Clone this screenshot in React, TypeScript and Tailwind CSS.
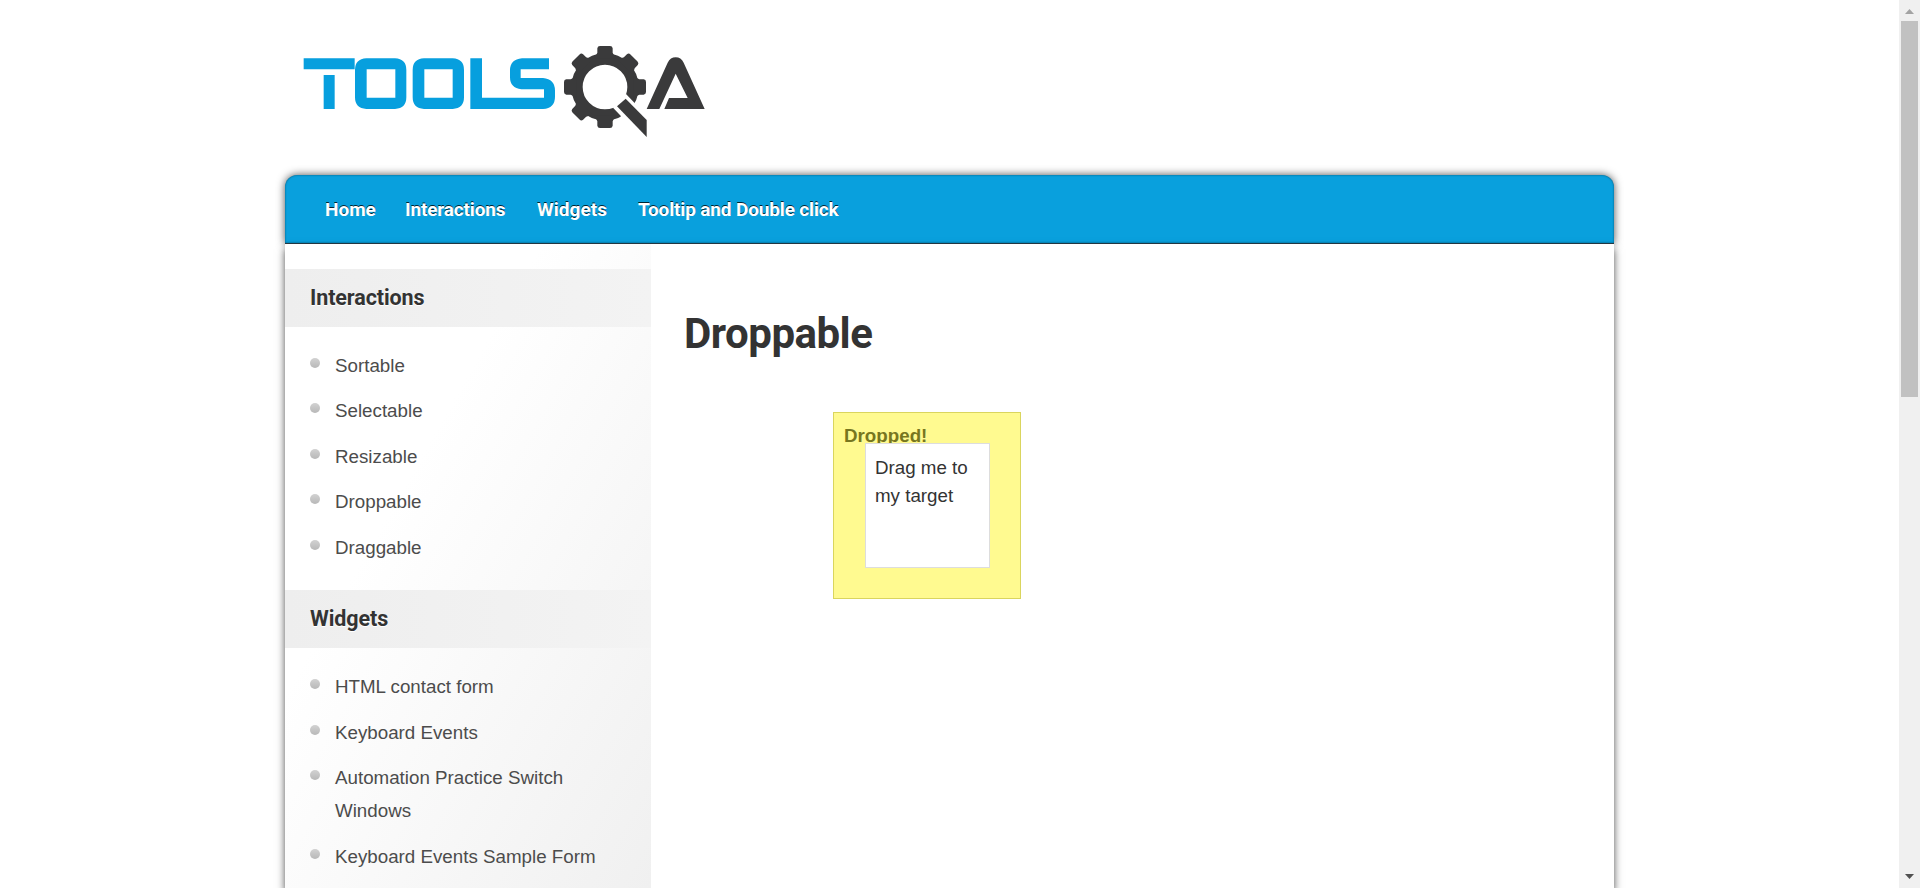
import React from "react";

const interactions = ["Sortable", "Selectable", "Resizable", "Droppable", "Draggable"];
const widgets = [
  "HTML contact form",
  "Keyboard Events",
  "Automation Practice Switch Windows",
  "Keyboard Events Sample Form",
];

function Logo() {
  return (
    <svg className="block h-[120px] w-[430px]" viewBox="0 0 1290 360" role="img" aria-label="ToolsQA">
      <g fill="#079fde" fillRule="evenodd">
        <path d="M41 85H194V118H41ZM101 135H134V237H101Z" />
        <path d="M229 85H315Q349 87 349 120V202Q349 235 315 237H229Q195 235 195 202V120Q195 87 229 85ZM230 118V203H316V118Z" />
        <path d="M402 85H488Q522 87 522 120V202Q522 235 488 237H402Q368 235 368 202V120Q368 87 402 85ZM403 118V203H488V118Z" />
        <path d="M541 85H576V203H762V178H694Q660 174 660 142V121Q660 88 696 85H777V118H692V144H759Q795 147 795 182V200Q795 234 759 237H541Z" />
      </g>
      <g fill="#3a3a3b">
        <circle cx="945" cy="171" r="84" fill="none" stroke="#3a3a3b" strokeWidth="34" />
        {[0, 45, 90, 180, 225, 270, 315].map((angle) => (
          <path
            key={angle}
            transform={`rotate(${angle} 945 171)`}
            d="M913 86L922 68V55Q923 48 930 48H960Q967 48 968 55V68L977 86Z"
          />
        ))}
        <path fill="#fff" d="M1008 192L1036 221L1090 240V340L1000 300L992 257L969 233L980 215Z" />
        <path d="M981 229L1007 206L1070 270V321Z" />
        <path d="M1070 237L1133 98Q1141 82 1157 82T1181 98L1244 237H1123L1137 204H1193L1157 131L1108 237Z" />
      </g>
    </svg>
  );
}

function MenuSection({
  title,
  items,
  listPadding,
}: {
  title: string;
  items: string[];
  listPadding: string;
}) {
  return (
    <section>
      <h3 className="flex h-[58px] items-center bg-linear-to-r from-[#eeeeee] to-[#f3f3f3] pt-px pl-[25px] font-[Roboto,sans-serif] text-[21.5px] font-bold tracking-[-0.1px] text-[#333] [text-shadow:0_1px_0_#fff]">
        {title}
      </h3>
      <ul className={`flex flex-col gap-[12.6px] pl-[25px] ${listPadding}`}>
        {items.map((item) => (
          <li key={item} className="flex items-start">
            <span className="mt-[9px] mr-[15px] size-[10px] shrink-0 rounded-full bg-linear-to-b from-[#d2d2d2] to-[#b8b8b8]" />
            <a className="w-[280px] text-[18.75px] leading-[33px] text-[#4c4c4c]">{item}</a>
          </li>
        ))}
      </ul>
    </section>
  );
}

export default function App() {
  return (
    <div className="flex h-[888px] w-full overflow-hidden bg-white font-['Liberation_Sans',Arial,sans-serif]">
      <div className="flex h-full min-w-0 flex-1 flex-col pl-[285px]">
        <header className="h-[175px] shrink-0 pt-[30px] pl-[5px]">
          <Logo />
        </header>
        <nav className="flex h-[69px] w-[1329px] shrink-0 items-center rounded-t-[12px] border-b border-[#263b46] bg-[#09a0dd] pt-[2px] pl-[40px] font-[Roboto,sans-serif] text-[19px] font-bold whitespace-nowrap text-white shadow-[0_0_8px_#000000b0,inset_0_0_2px_#00000080] [text-shadow:0_-1px_0_#000000cc]">
          <a className="w-[80px]">Home</a>
          <a className="w-[132px] tracking-[-0.15px]">Interactions</a>
          <a className="w-[101px] tracking-[0.05px]">Widgets</a>
          <a className="tracking-[-0.15px]">Tooltip and Double click</a>
        </nav>
        <main className="flex min-h-0 w-[1329px] flex-1 bg-white shadow-[0_5px_8px_#000000b0]">
          <aside className="w-[366px] shrink-0 bg-linear-to-br from-white from-35% to-[#f0f0f0] pt-[25px]">
            <MenuSection title="Interactions" items={interactions} listPadding="pt-[21.6px] pb-[26px]" />
            <MenuSection title="Widgets" items={widgets} listPadding="pt-[22px]" />
          </aside>
          <div className="pt-[65px] pl-[33px]">
            <h1 className="font-[Roboto,sans-serif] text-[42px] leading-[50px] font-bold tracking-[-0.5px] text-[#333]">
              Droppable
            </h1>
            <div className="relative mt-[53px] ml-[149px] h-[187px] w-[188px] border border-[#dad55e] bg-[#fffa90] pt-[9px] pl-[10px]">
              <p className="text-[18.75px] leading-[28px] font-bold text-[#777620]">Dropped!</p>
              <div className="absolute top-[30px] left-[31px] h-[125px] w-[125px] border border-[#dddddd] bg-white pt-[10px] pl-[9px] text-[18.75px] leading-[28px] text-[#333]">
                Drag me to my target
              </div>
            </div>
          </div>
        </main>
      </div>
      <div className="flex w-[21px] shrink-0 flex-col items-center justify-between bg-[#f0f0f0]">
        <div className="flex flex-col items-center">
          <svg className="block h-[21px] w-[17px]" viewBox="0 0 17 21" fill="#a3a3a3">
            <path d="M4 14L8.500 9L13 14Z" />
          </svg>
          <div className="h-[376px] w-[17px] bg-[#c1c1c1]" />
        </div>
        <svg className="block h-[21px] w-[17px]" viewBox="0 0 17 21" fill="#505050">
          <path d="M4 7L8.500 12L13 7Z" />
        </svg>
      </div>
    </div>
  );
}
